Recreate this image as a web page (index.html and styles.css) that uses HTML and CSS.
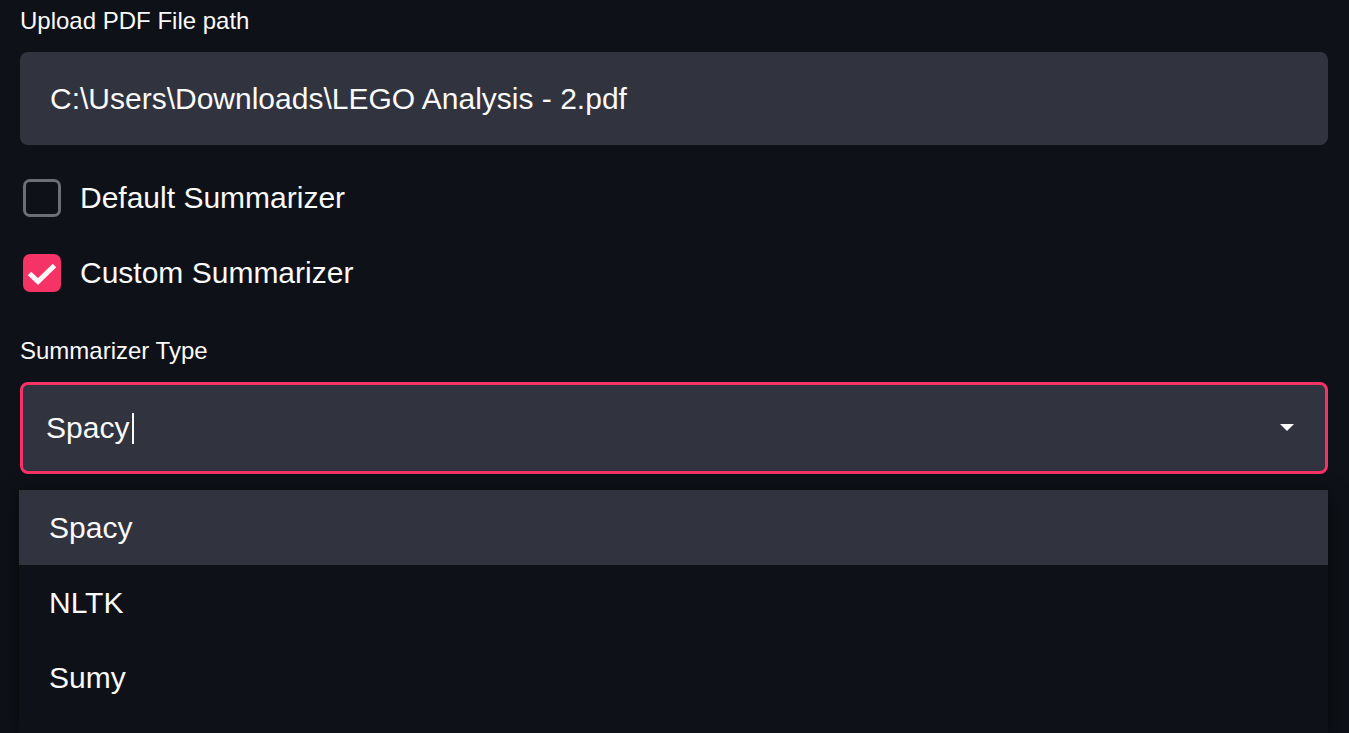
FILE: index.html
```html
<!DOCTYPE html>
<html lang="en">
<head>
<meta charset="utf-8">
<title>Summarizer</title>
<link rel="stylesheet" href="styles.css">
</head>
<body>
<main class="form">
  <label class="field-label">Upload PDF File path</label>
  <div class="text-input">C:\Users\Downloads\LEGO Analysis - 2.pdf</div>

  <div class="checks">
    <div class="check-row">
      <span class="box"></span>
      <span class="check-label">Default Summarizer</span>
    </div>
    <div class="check-row">
      <span class="box checked">
        <svg viewBox="0 0 32 32" width="32" height="32"><path d="M3.5 16.5 L12 24.5 L28.5 8.5" fill="none" stroke="#fafafa" stroke-width="5" stroke-linecap="butt" stroke-linejoin="miter"/></svg>
      </span>
      <span class="check-label">Custom Summarizer</span>
    </div>
  </div>

  <label class="field-label">Summarizer Type</label>
  <div class="select-wrap">
    <div class="select">
      <span class="select-value">Spacy</span><span class="caret"></span>
      <svg class="arrow" viewBox="0 0 14 8" width="14" height="8"><path d="M0 0 H14 L7 7 Z" fill="#fafafa"/></svg>
    </div>
    <ul class="menu">
      <li class="option active">Spacy</li>
      <li class="option">NLTK</li>
      <li class="option">Sumy</li>
      <li class="option filler"></li>
    </ul>
  </div>
</main>
</body>
</html>
```

FILE: styles.css
```css
html, body {
  margin: 0;
  padding: 0;
  background: #0e1117;
  color: #fafafa;
  font-family: "Liberation Sans", Arial, sans-serif;
  height: 733px;
  overflow: hidden;
}

.form {
  display: flex;
  flex-direction: column;
  padding: 6px 21px 0 20px;
}

.field-label {
  display: block;
  font-size: 24px;
  line-height: 30px;
  margin-bottom: 16px;
}

.text-input {
  height: 93px;
  box-sizing: border-box;
  background: #31333f;
  border-radius: 8px;
  padding: 0 30px;
  display: flex;
  align-items: center;
  font-size: 30px;
}

.checks {
  display: flex;
  flex-direction: column;
  padding-top: 15px;
  margin-bottom: 26px;
}

.check-row {
  height: 75px;
  display: flex;
  align-items: center;
  gap: 19px;
  padding-left: 3px;
}

.box {
  width: 38px;
  height: 38px;
  box-sizing: border-box;
  border: 3px solid #6c6e78;
  border-radius: 7px;
  display: flex;
  align-items: center;
  justify-content: center;
}

.box.checked {
  background: #f63366;
  border-color: #f63366;
}

.check-label {
  font-size: 30px;
}

.select-wrap {
  position: relative;
}

.select {
  height: 92px;
  box-sizing: border-box;
  background: #31333f;
  border: 3px solid #f63366;
  border-radius: 8px;
  display: flex;
  align-items: center;
  padding: 0 31px 0 23px;
  font-size: 30px;
}

.caret {
  display: inline-block;
  width: 2px;
  height: 31px;
  background: #fafafa;
  margin-left: 3px;
}

.arrow {
  margin-left: auto;
}

.menu {
  position: absolute;
  top: 108px;
  left: -1px;
  right: 0;
  margin: 0;
  padding: 0;
  list-style: none;
  background: #0e1117;
  box-shadow: 0 4px 18px rgba(0, 0, 0, 0.55);
}

.option {
  height: 75px;
  display: flex;
  align-items: center;
  padding-left: 30px;
  font-size: 30px;
}

.option.filler {
  height: 18px;
}

.option.active {
  background: #31333f;
}
```
